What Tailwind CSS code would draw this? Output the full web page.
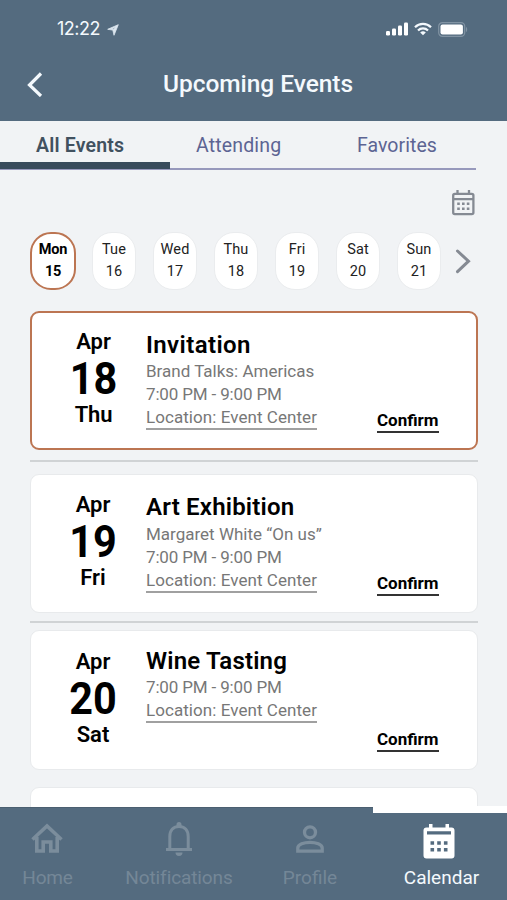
<!DOCTYPE html>
<html lang="en">
<head>
<meta charset="utf-8">
<title>Upcoming Events</title>
<script src="https://cdn.jsdelivr.net/npm/@tailwindcss/browser@4"></script>
</head>
<body class="w-[507px] h-[900px] overflow-hidden bg-[#f1f3f5] font-['Roboto',sans-serif] flex flex-col">
<header class="h-[121px] shrink-0 bg-[#546b7f] text-[#f4f9fd]">
  <div class="h-[58px] flex items-center pl-[57px] pr-[39px]">
    <span class="font-['Inter',sans-serif] text-[18px] tracking-[-0.5px] leading-[24px]">12:22</span>
    <svg class="ml-[7px] mt-[2px]" width="12" height="12" viewBox="0 0 12 12" fill="#dce6ef" stroke="#dce6ef" stroke-width="0.8" stroke-linejoin="round"><path fill-rule="evenodd" d="M11.300 .7L.7 5.300L5.800 6.100L7 11.300ZM8.800 3.100L4.600 4.900L6.500 5.200Z"/></svg>
    <div class="ml-auto flex items-center gap-[6px]">
      <svg width="22" height="14" viewBox="0 0 22 14" fill="#fff"><rect y="9" width="4" height="4.500" rx="1.200"/><rect x="6" y="6.500" width="4" height="7" rx="1.200"/><rect x="12" y="3.500" width="4" height="10" rx="1.200"/><rect x="18" y="0.500" width="4" height="13" rx="1.200"/></svg>
      <svg width="18" height="14" viewBox="0 0 18 14" fill="none" stroke="#f4f9fd" stroke-width="2.200"><path d="M1 5.200a11.300 11.300 0 0 1 16 0M4 8.400a7 7 0 0 1 10 0"/><path d="M9 13.300L6.200 10.600a4 4 0 0 1 5.600 0Z" fill="#f4f9fd" stroke="none"/></svg>
      <svg width="30" height="15" viewBox="0 0 30 15"><rect x=".7" y=".7" width="26" height="13.600" rx="3.600" fill="none" stroke="#8193a3" stroke-width="1.200"/><rect x="2.500" y="2.500" width="22.400" height="10" rx="2" fill="#fff"/><path d="M28 5v5c1.600-.6 1.600-4.400 0-5Z" fill="#8193a3"/></svg>
    </div>
  </div>
  <div class="flex items-center h-[52px] pl-[27px]">
    <svg width="16" height="26" viewBox="0 0 16 26" fill="none" stroke="#f4f9fd" stroke-width="3.200"><path d="M14 2.500L2.500 14L14 25"/></svg>
    <h1 class="ml-[120px] font-medium text-[24.500px] leading-[30px] tracking-[-0.05px] whitespace-nowrap">Upcoming Events</h1>
  </div>
</header>

<nav class="relative h-[49px] shrink-0 w-[476px] border-b-2 border-[#9799bc] text-[19.5px] text-[#5c6493] whitespace-nowrap">
  <div class="flex h-full">
    <span class="w-[170px] pl-[36px] pt-[13px] leading-[24px] tracking-[0.2px] font-semibold text-[#41515f]">All Events</span>
    <span class="w-[187px] pl-[26px] pt-[13px] leading-[24px] tracking-[0.15px]">Attending</span>
    <span class="pt-[13px] leading-[24px] tracking-[0.05px]">Favorites</span>
  </div>
  <div class="absolute left-0 -bottom-[1px] w-[170px] h-[7px] bg-[#384b5b]"></div>
</nav>

<main class="flex-1 min-h-0 overflow-hidden pl-[30px] pr-[29px]">
  <div class="flex justify-end pt-[20px] pr-[3px]">
    <svg width="23" height="26" viewBox="0 0 23 26" fill="none" stroke="#858a93" stroke-width="2.300"><rect x="1.200" y="3.800" width="20.200" height="20.400" rx="1.600"/><path d="M1 9.200h20.600M5.500 0v4M17 0v4"/><path d="M5.200 13.700h2.600M10 13.700h2.600M14.800 13.700h2.600M5.200 18.700h2.600M10 18.700h2.600M14.800 18.700h2.600" stroke-width="2.600"/></svg>
  </div>
  <div class="mt-[16px] flex text-[14.5px] leading-[22px] text-center text-[#222] tracking-[0.1px]">
    <div class="w-[46px] h-[58px] rounded-[21px] border-[2.5px] border-[#bc7552] bg-white pt-[5px] font-bold text-black tracking-[-0.2px]">Mon<br>15</div>
    <div class="ml-[16px] w-[44px] h-[58px] rounded-[20px] border border-[#eaecee] bg-white pt-[6px]">Tue<br>16</div>
    <div class="ml-[17px] w-[44px] h-[58px] rounded-[20px] border border-[#eaecee] bg-white pt-[6px]">Wed<br>17</div>
    <div class="ml-[17px] w-[44px] h-[58px] rounded-[20px] border border-[#eaecee] bg-white pt-[6px]">Thu<br>18</div>
    <div class="ml-[17px] w-[44px] h-[58px] rounded-[20px] border border-[#eaecee] bg-white pt-[6px]">Fri<br>19</div>
    <div class="ml-[17px] w-[44px] h-[58px] rounded-[20px] border border-[#eaecee] bg-white pt-[6px]">Sat<br>20</div>
    <div class="ml-[17px] w-[44px] h-[58px] rounded-[20px] border border-[#eaecee] bg-white pt-[6px]">Sun<br>21</div>
    <svg class="ml-[14px] mt-[16px] shrink-0" width="16" height="26" viewBox="0 0 16 26" fill="none" stroke="#858a93" stroke-width="3" stroke-linecap="round"><path d="M2.500 3L13.500 13.200L2.500 23.600"/></svg>
  </div>

  <article class="mt-[21px] h-[139px] rounded-[9px] border-2 border-[#bc7552] bg-white flex text-black whitespace-nowrap">
    <div class="w-[123px] pt-[15px] text-center font-semibold text-[22px]">
      <p class="leading-[28px]">Apr</p><p class="text-[45px] leading-[45px] font-bold scale-x-92">18</p><p class="leading-[28px] tracking-[-0.2px]">Thu</p>
    </div>
    <div class="w-[222px] pt-[17px] text-[17px] leading-[23px] text-[#777] -ml-[9px]">
      <h2 class="font-semibold text-[24px] leading-[30px] tracking-[0.4px] text-black">Invitation</h2>
      <p>Brand Talks: Americas</p><p class="tracking-[-0.15px]">7:00 PM - 9:00 PM</p>
      <p class="w-fit border-b-2 border-[#a0a0a0] leading-[22px] tracking-[0.06px]">Location: Event Center</p>
    </div>
    <a class="self-end mb-[15px] ml-[9px] pt-px font-bold text-[17px] leading-[22px] border-b-2 border-[#333]">Confirm</a>
  </article>
  <hr class="mt-[10px] border-t-2 border-[#d0d3d5]">

  <article class="mt-[12px] h-[139px] rounded-[9px] border border-[#e8eaec] bg-white flex text-black whitespace-nowrap">
    <div class="w-[124px] pt-[16px] text-center font-semibold text-[22px]">
      <p class="leading-[28px]">Apr</p><p class="text-[45px] leading-[45px] font-bold scale-x-92">19</p><p class="leading-[28px]">Fri</p>
    </div>
    <div class="w-[222px] pt-[17px] text-[17px] leading-[23px] text-[#777] -ml-[9px]">
      <h2 class="font-semibold text-[24px] leading-[30px] tracking-[0.2px] text-black">Art Exhibition</h2>
      <p class="pt-px">Margaret White “On us”</p><p class="tracking-[-0.15px]">7:00 PM - 9:00 PM</p>
      <p class="w-fit border-b-2 border-[#a0a0a0] leading-[22px] tracking-[0.06px]">Location: Event Center</p>
    </div>
    <a class="self-end mb-[16px] ml-[9px] pt-px font-bold text-[17px] leading-[22px] border-b-2 border-[#333]">Confirm</a>
  </article>
  <hr class="mt-[8px] border-t-2 border-[#d0d3d5]">

  <article class="mt-[7px] h-[140px] rounded-[9px] border border-[#e8eaec] bg-white flex text-black whitespace-nowrap">
    <div class="w-[124px] pt-[17px] text-center font-semibold text-[22px]">
      <p class="leading-[28px]">Apr</p><p class="text-[45px] leading-[45px] font-bold scale-x-92">20</p><p class="leading-[28px]">Sat</p>
    </div>
    <div class="w-[222px] pt-[15px] text-[17px] leading-[23px] text-[#777] -ml-[9px]">
      <h2 class="font-semibold text-[24px] leading-[30px] tracking-[0.2px] text-black">Wine Tasting</h2>
      <p class="tracking-[-0.15px]">7:00 PM - 9:00 PM</p>
      <p class="w-fit border-b-2 border-[#a0a0a0] leading-[22px] tracking-[0.06px]">Location: Event Center</p>
    </div>
    <a class="self-end mb-[17px] ml-[9px] pt-px font-bold text-[17px] leading-[22px] border-b-2 border-[#333]">Confirm</a>
  </article>
  <article class="mt-[17px] h-[139px] rounded-[9px] border border-[#e8eaec] bg-white"></article>
</main>

<footer class="relative h-[93px] shrink-0 bg-[#546b7f] border-t border-[#4b5f70] text-[19px] leading-[24px] text-[#748797] whitespace-nowrap">
  <div class="absolute right-0 -top-[2px] w-[134px] h-[7px] bg-white"></div>
  <div class="flex h-full">
    <div class="w-[94px] flex flex-col items-center pt-[15px]">
      <svg width="32" height="32" viewBox="0 0 32 32" fill="none" stroke="#7b8d9c" stroke-width="3.600"><path d="M1.500 16.500L16 3L30.500 16.500M5.800 14V28H12.200V19H19.800V28H26.200V14"/></svg>
      <span class="mt-[11px] pl-px tracking-[-0.2px]">Home</span>
    </div>
    <div class="w-[170px] flex flex-col items-center pt-[14px]">
      <svg width="28" height="34" viewBox="0 0 28 34" fill="none" stroke="#7b8d9c" stroke-width="3"><path d="M1 27.500H27M4.800 27V14.500C4.800 8 8.500 4.400 14 4.400S23.200 8 23.200 14.500V27"/><path d="M11.500 4V2.500a2.500 2.500 0 0 1 5 0V4ZM10.500 30.500h7a3.500 3.500 0 0 1-7 0Z" fill="#7b8d9c" stroke="none"/></svg>
      <span class="mt-[10px] tracking-[-0.1px]">Notifications</span>
    </div>
    <div class="w-[91px] flex flex-col items-center pt-[16px]">
      <svg width="28" height="30" viewBox="0 0 28 30" fill="none" stroke="#7b8d9c" stroke-width="3.300"><circle cx="14" cy="8.300" r="5.500"/><path d="M1.800 27.200V24C1.800 20.500 8 18.300 14 18.300S26.200 20.500 26.200 24V27.200Z"/></svg>
      <span class="mt-[12px] pl-px">Profile</span>
    </div>
    <div class="w-[152px] pl-[16px] flex flex-col items-center pt-[16px] text-[#f4f9fd]">
      <svg width="32" height="35" viewBox="0 0 32 35"><path fill="#fff" fill-rule="evenodd" d="M6 0h3.500v3.500h13V0H26v3.500h2.500q3 0 3 3V31.500q0 3-3 3h-25q-3 0-3-3V6.500q0-3 3-3H6ZM4 7.200v3.300h24V7.200ZM7.500 17.200v3.600h3.600v-3.600ZM14.200 17.200v3.600h3.600v-3.600ZM20.900 17.200v3.600h3.600v-3.600ZM7.500 23.900v3.600h3.600v-3.600ZM14.200 23.900v3.600h3.600v-3.600ZM20.900 23.900v3.600h3.600v-3.600Z"/></svg>
      <span class="mt-[7px] pl-[5px]">Calendar</span>
    </div>
  </div>
</footer>
</body>
</html>
